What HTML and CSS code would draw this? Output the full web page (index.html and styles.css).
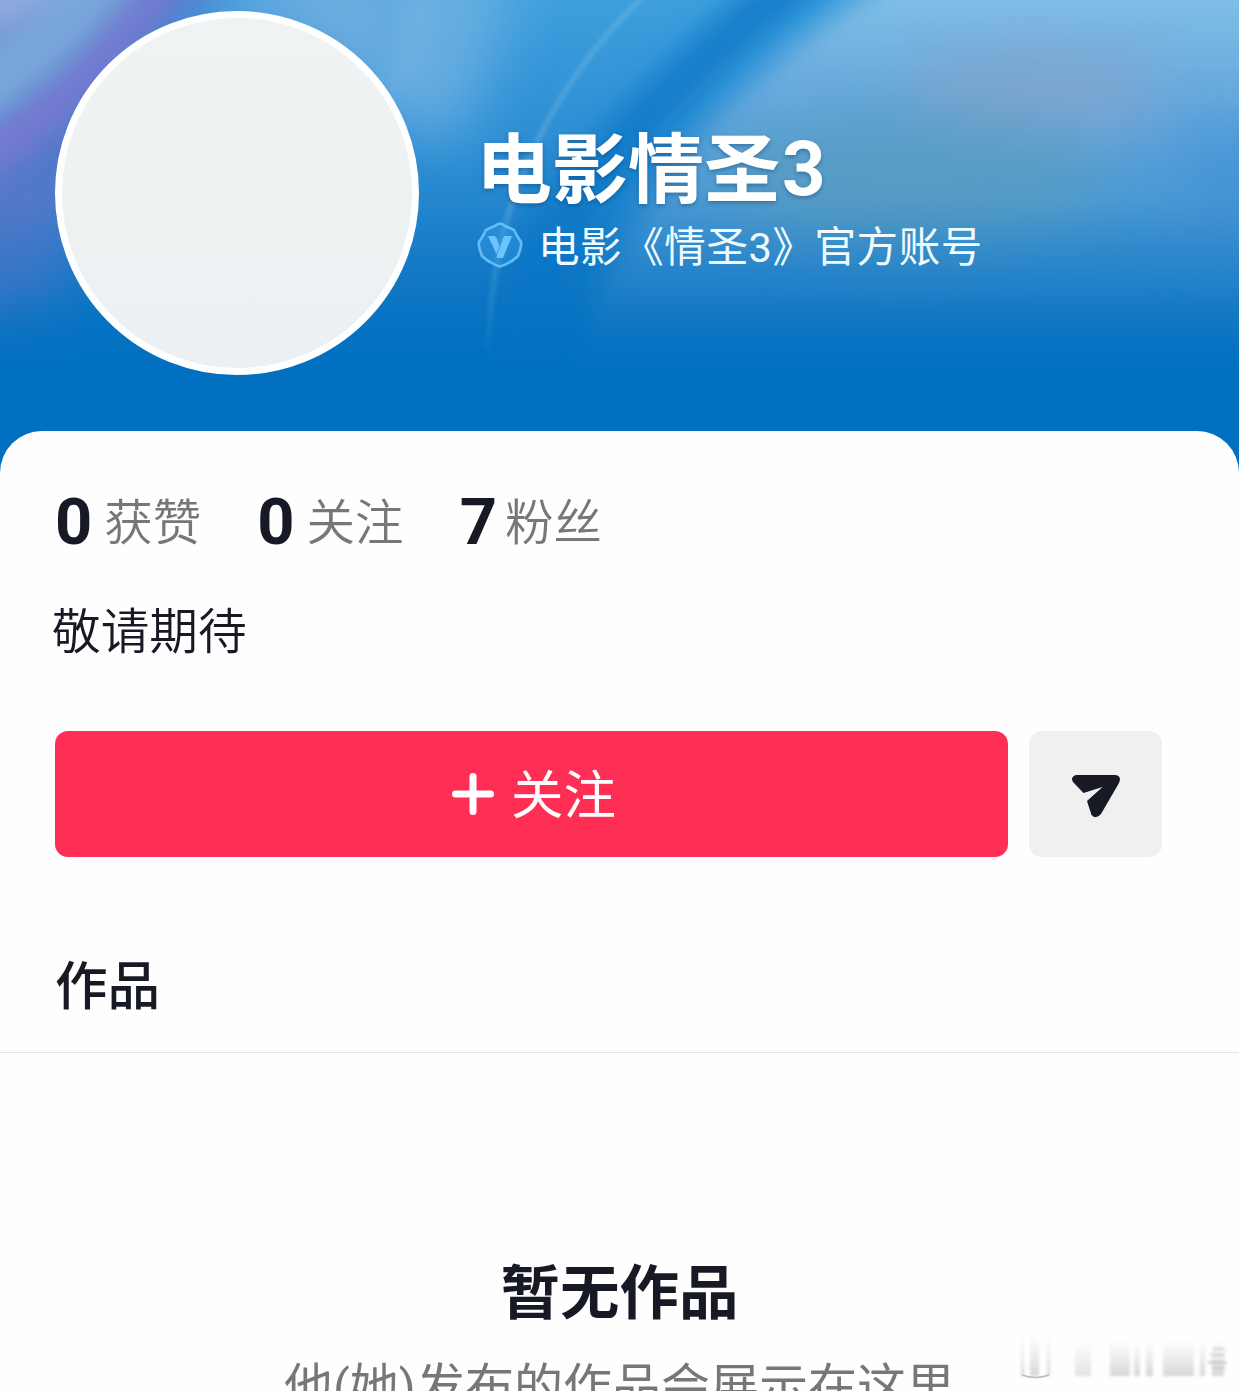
FILE: index.html
```
<!DOCTYPE html>
<html lang="zh-CN">
<head>
    <meta charset="UTF-8">
    <title>电影情圣3</title>
    <link rel="stylesheet" href="styles.css">
</head>
<body>
    <div class="page">
        <header class="hero">
            <svg class="hero-bg" viewBox="0 0 1239 480" preserveAspectRatio="none">
                <defs>
                    <linearGradient id="base" x1="0" y1="0" x2="0" y2="1">
                        <stop offset="0" stop-color="#3f9fdd"/>
                        <stop offset="0.35" stop-color="#288ad1"/>
                        <stop offset="0.6" stop-color="#187cc7"/>
                        <stop offset="0.78" stop-color="#0270c0"/>
                    </linearGradient>
                    <linearGradient id="fade" x1="0" y1="0" x2="0" y2="1">
                        <stop offset="0.42" stop-color="#0270c0" stop-opacity="0"/>
                        <stop offset="0.6" stop-color="#0270c0" stop-opacity="0.4"/>
                        <stop offset="0.77" stop-color="#0270c0"/>
                    </linearGradient>
                    <linearGradient id="glow" x1="0" y1="0" x2="0" y2="1">
                        <stop offset="0" stop-color="#8ac6e8"/>
                        <stop offset="0.3" stop-color="#68aade"/>
                        <stop offset="0.6" stop-color="#4495d2"/>
                        <stop offset="1" stop-color="#1678c4"/>
                    </linearGradient>
                    <filter id="b2" x="-50%" y="-50%" width="200%" height="200%"><feGaussianBlur stdDeviation="2"/></filter>
                    <filter id="b12" x="-50%" y="-50%" width="200%" height="200%"><feGaussianBlur stdDeviation="12"/></filter>
                    <filter id="b30" x="-50%" y="-50%" width="200%" height="200%"><feGaussianBlur stdDeviation="30"/></filter>
                </defs>
                <rect width="1239" height="480" fill="url(#base)"/>
                <!-- purple corner -->
                <path d="M-60 -60H260L150 60L40 330H-60Z" fill="#5278c9" filter="url(#b30)"/>
                <path d="M-50 175Q70 110 175 -40" fill="none" stroke="#7a7cd3" stroke-width="50" opacity="0.8" filter="url(#b12)"/>
                <path d="M-60 112Q40 60 115 -40" fill="none" stroke="#78a6d9" stroke-width="66" filter="url(#b12)"/>
                <path d="M-40 -40H100Q50 20 -40 50Z" fill="#8eaade" filter="url(#b12)"/>
                <!-- centre light -->
                <path d="M230 -40H400Q410 60 380 110Q330 40 230 0Z" fill="#6fade0" filter="url(#b30)"/>
                <path d="M410 -40Q405 45 375 110L450 150Q500 60 510 -40Z" fill="#74b4e3" opacity="0.8" filter="url(#b30)"/>
                <path d="M402 -20Q402 45 382 95L400 100Q430 60 435 -20Z" fill="#8cc0e8" opacity="0.3" filter="url(#b12)"/>
                <!-- dark curve -->
                <path d="M870 -40Q690 80 620 190Q565 260 555 400L490 380Q500 240 550 190Q640 80 780 -40Z" fill="#0878c8" opacity="0.8" filter="url(#b12)"/>
                <!-- right glow -->
                <path d="M920 -40Q740 70 672 175Q590 280 570 400H1300V-40Z" fill="url(#glow)" filter="url(#b12)"/>
                <ellipse cx="1035" cy="90" rx="130" ry="45" fill="#86a4cc" opacity="0.75" filter="url(#b30)"/>
                <ellipse cx="910" cy="180" rx="190" ry="70" fill="#5a9cba" opacity="0.6" filter="url(#b30)"/>
                <path d="M1170 130Q1190 150 1190 250H1300V130Z" fill="#3f8fd5" opacity="0.6" filter="url(#b30)"/>
                <!-- thin rays -->
                <path d="M650 -10Q575 60 536 145Q492 230 488 350" fill="none" stroke="#7fc0e2" stroke-width="5" opacity="0.4" filter="url(#b2)"/>
                <rect width="1239" height="480" fill="url(#fade)"/>
            </svg>
            <div class="avatar"></div>
            <div class="identity">
                <h1 class="name">电影情圣<span class="num">3</span></h1>
                <div class="verified">
                    <svg class="badge" viewBox="0 0 46 46">
                        <path d="M23 1.500Q26 2 28 4Q33 6 37 8Q39 12 42 17Q45 20 44 24Q43 29 41 34Q37 38 33 40Q28 43 23 44.500Q18 43 13 40Q9 38 5 34Q3 29 2 24Q1 20 4 17Q7 12 9 8Q13 6 18 4Q20 2 23 1.500Z" fill="#3fa0e8" fill-opacity="0.35" stroke="#64bdf9" stroke-width="2.6"/>
                        <path d="M11 14H16.5Q19 14 20 17L22.5 24L19.5 32ZM27 14H35L26 36H21Q19 36 20 33Z" fill="#6bc3ff"/>
                    </svg>
                    <span>电影《情圣3》官方账号</span>
                </div>
            </div>
        </header>

        <main class="card">
            <div class="stats">
                <div class="stat"><b>0</b><span>获赞</span></div>
                <div class="stat"><b>0</b><span>关注</span></div>
                <div class="stat fans"><b>7</b><span>粉丝</span></div>
            </div>
            <p class="bio">敬请期待</p>
            <div class="actions">
                <button class="follow">
                    <svg class="plus" viewBox="0 0 42 42"><path d="M21 3.500V38.500M3.500 21H38.500" stroke="#fff" stroke-width="7" stroke-linecap="round"/></svg>
                    <span>关注</span>
                </button>
                <button class="message">
                    <svg class="plane" viewBox="0 0 48 43">
                        <path d="M4 0H43.500Q50 1 47 8L29 39Q24 45 19.500 40L15 26L30.500 12L11.500 18L1 7Q-2 2 4 0Z" fill="#171925"/>
                    </svg>
                </button>
            </div>
            <div class="tabs"><span class="tab">作品</span></div>
            <section class="empty">
                <h2>暂无作品</h2>
                <p>他(她)发布的作品会展示在这里</p>
            </section>
        </main>

        <!-- worn watermark in the corner -->
        <svg class="watermark" viewBox="0 0 229 61">
            <defs>
                <linearGradient id="wm" x1="0" y1="0" x2="0" y2="1">
                    <stop offset="0" stop-color="#ccc" stop-opacity="0"/>
                    <stop offset="1" stop-color="#bbb" stop-opacity="0.6"/>
                </linearGradient>
                <filter id="soft"><feGaussianBlur stdDeviation="1.6"/></filter>
            </defs>
            <g fill="url(#wm)" filter="url(#soft)">
                <rect x="11" y="6" width="3" height="40"/>
                <rect x="20" y="4" width="9" height="42"/>
                <rect x="37" y="6" width="3" height="40"/>
                <rect x="65" y="10" width="16" height="36" opacity="0.7"/>
                <rect x="100" y="10" width="20" height="36"/>
                <rect x="124" y="10" width="6" height="36"/>
                <rect x="136" y="10" width="7" height="36"/>
                <rect x="153" y="10" width="31" height="36"/>
                <rect x="190" y="10" width="5" height="36"/>
                <rect x="202" y="10" width="12" height="36"/>
            </g>
            <path d="M12 45Q25 50 39 45" fill="none" stroke="#bbb" stroke-width="1.500"/>
            <g fill="#aaa" opacity="0.5" filter="url(#soft)">
                <rect x="203" y="18" width="12" height="2"/>
                <rect x="200" y="24" width="15" height="2"/>
                <rect x="198" y="31" width="19" height="3"/>
                <rect x="203" y="37" width="12" height="2"/>
            </g>
        </svg>
    </div>
</body>
</html>
```
FILE: styles.css
```
* {
    box-sizing: border-box;
}
body {
    margin: 0;
    background-color: #fefefe;
    font-family: Roboto, "Noto Sans CJK SC", sans-serif;
    color: #171925;
}
h1, h2, p {
    margin: 0;
}
.page {
    position: relative;
    height: 1391px;
    overflow: hidden;
}
.hero {
    position: relative;
    height: 480px;
    padding: 11px 55px 0;
    display: flex;
    gap: 58px;
    background-color: #0270c0;
}
.hero-bg {
    position: absolute;
    top: 0;
    left: 0;
    width: 100%;
    height: 100%;
}
.avatar {
    position: relative;
    width: 364px;
    height: 364px;
    flex: none;
    border: 7px solid #fff;
    border-radius: 50%;
    background: linear-gradient(#eff3f3, #edf0f2);
}
.identity {
    position: relative;
    padding-top: 110px;
    color: #fff;
}
.name {
    height: 99px;
    margin-left: -1px;
    font-size: 76px;
    line-height: 100px;
    font-weight: bold;
    text-shadow: 0 2px 4px rgba(0, 40, 80, 0.35);
}
.num {
    display: inline-block;
    margin-left: 2px;
    vertical-align: 2px;
    line-height: 1;
}
.verified {
    display: flex;
    align-items: center;
    gap: 16px;
    height: 50px;
    font-size: 41.5px;
    line-height: 50px;
    letter-spacing: 0.6px;
    color: #f0fbff;
    white-space: nowrap;
}
.verified span {
    padding-top: 5px;
    margin-left: -1px;
}
.badge {
    width: 46px;
    height: 46px;
}
.card {
    position: relative;
    height: 960px;
    margin-top: -49px;
    padding-top: 59px;
    border-radius: 42px 42px 0 0;
    background-color: #fefefe;
}
.stats {
    display: flex;
    height: 64px;
    padding-left: 55px;
    gap: 56px;
}
.stat {
    display: flex;
    align-items: center;
    gap: 12px;
}
.stat b {
    font-size: 65px;
    line-height: 64px;
}
.stat span {
    padding-top: 4px;
    font-size: 48.5px;
    line-height: 64px;
    color: #77777a;
    font-weight: 350;
}
.fans {
    gap: 8px;
}
.bio {
    padding: 49px 0 0 52px;
    font-size: 48.7px;
    line-height: 60px;
    font-weight: 350;
}
.actions {
    display: flex;
    gap: 21px;
    padding: 68px 77px 0 55px;
}
.follow, .message {
    display: flex;
    justify-content: center;
    align-items: center;
    height: 126px;
    padding: 0;
    border: none;
    border-radius: 13px;
    font-family: inherit;
}
.follow {
    flex: 1;
    gap: 17px;
    padding-left: 5px;
    background-color: #ff2e55;
    color: #fff;
    font-size: 52.5px;
    line-height: 70px;
}
.follow span {
    padding-top: 3px;
}
.plus {
    width: 42px;
    height: 42px;
}
.message {
    width: 133px;
    padding-top: 5px;
    background-color: #f0f0f0;
}
.plane {
    width: 48px;
    height: 43px;
}
.tabs {
    height: 196px;
    padding: 95px 0 0 55px;
    border-bottom: 1px solid #e3e3e3;
}
.tab {
    display: block;
    font-size: 52.5px;
    line-height: 70px;
    font-weight: 500;
}
.empty {
    padding-top: 201px;
    text-align: center;
}
.empty h2 {
    font-size: 59.5px;
    line-height: 80px;
    font-weight: bold;
}
.empty p {
    padding-top: 22px;
    font-size: 49px;
    line-height: 64px;
    color: #77777a;
    white-space: nowrap;
}
.watermark {
    position: absolute;
    right: 0;
    bottom: 0;
    width: 229px;
    height: 61px;
}
```
